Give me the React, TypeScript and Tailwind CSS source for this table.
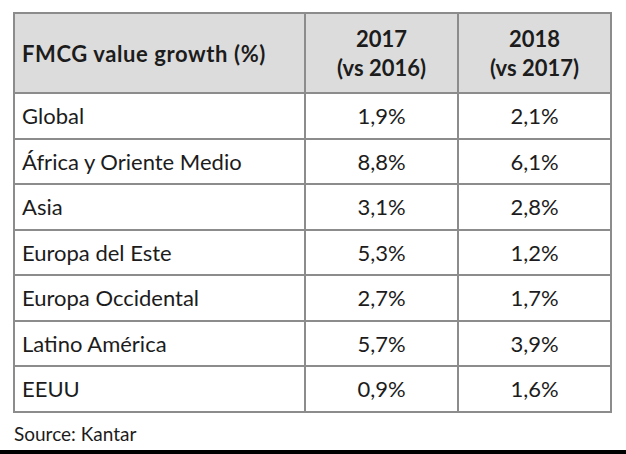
import React from "react";

const rows: [string, string, string][] = [
  ["Global", "1,9%", "2,1%"],
  ["África y Oriente Medio", "8,8%", "6,1%"],
  ["Asia", "3,1%", "2,8%"],
  ["Europa del Este", "5,3%", "1,2%"],
  ["Europa Occidental", "2,7%", "1,7%"],
  ["Latino América", "5,7%", "3,9%"],
  ["EEUU", "0,9%", "1,6%"],
];

export default function App() {
  return (
    <div
      className="w-[626px] h-[454px] bg-white flex flex-col text-[#1c1c1c] overflow-hidden"
      style={{ fontFamily: "Lato, 'Noto Sans', sans-serif" }}
    >
      <div className="ml-[13px] mt-[12px] w-[599px] border-2 border-[#8c8c8c]">
        <div className="grid grid-cols-[291px_153px_151px] h-[80px] bg-[#dcdcdc] border-b-2 border-[#8c8c8c]">
          <div className="border-r-2 border-[#8c8c8c] flex items-center pl-[7px] text-[22px] font-bold tracking-[0.6px]">
            FMCG value growth (%)
          </div>
          <div className="border-r-2 border-[#8c8c8c] flex flex-col items-center justify-center text-[22px] font-bold leading-[29px]">
            <span>2017</span>
            <span>(vs 2016)</span>
          </div>
          <div className="flex flex-col items-center justify-center text-[22px] font-bold leading-[29px]">
            <span>2018</span>
            <span>(vs 2017)</span>
          </div>
        </div>
        {rows.map((r, i) => (
          <div
            key={r[0]}
            className={
              i < rows.length - 1
                ? "grid grid-cols-[291px_153px_151px] h-[45.5px] border-b-2 border-[#8c8c8c] text-[22px]"
                : "grid grid-cols-[291px_153px_151px] h-[43.5px] text-[22px]"
            }
          >
            <div className="border-r-2 border-[#8c8c8c] flex items-center pl-[7px]">{r[0]}</div>
            <div className="border-r-2 border-[#8c8c8c] flex items-center justify-center">{r[1]}</div>
            <div className="flex items-center justify-center">{r[2]}</div>
          </div>
        ))}
      </div>
      <div className="ml-[14px] mt-[7px] text-[19px]">Source: Kantar</div>
      <div className="mt-auto h-[4px] bg-black w-full" />
    </div>
  );
}
